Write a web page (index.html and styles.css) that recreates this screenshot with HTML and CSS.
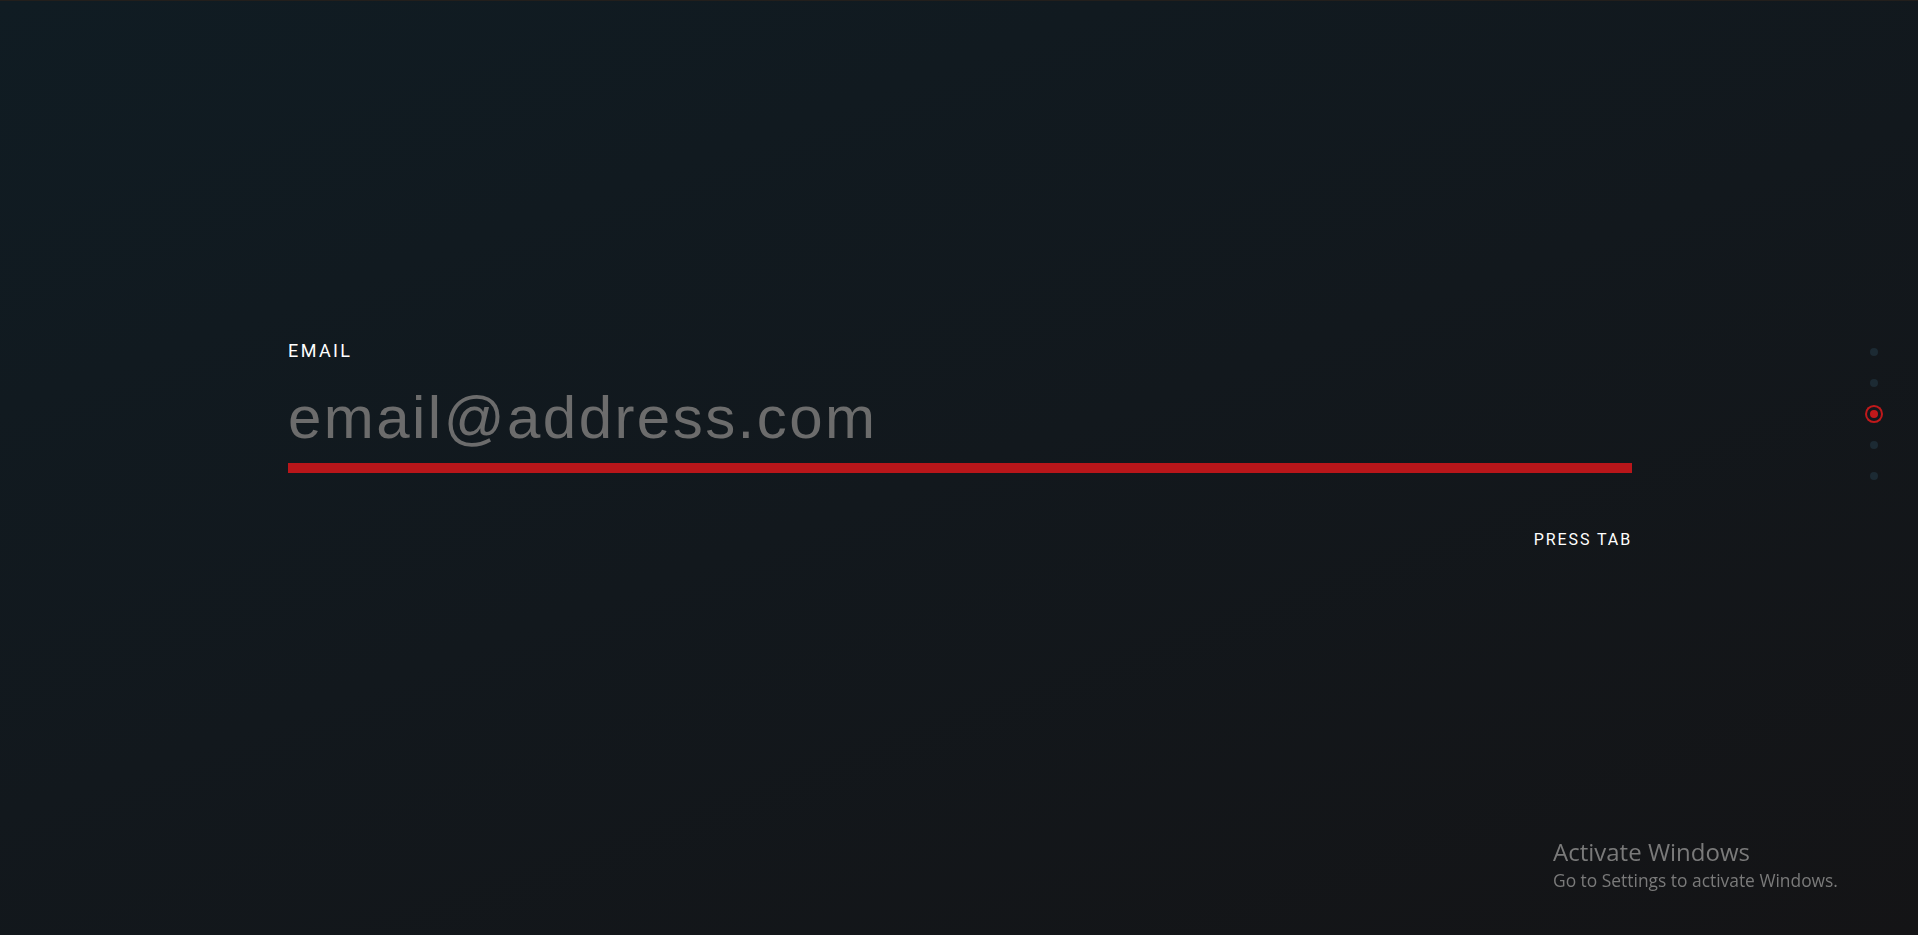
FILE: index.html
```html
<!DOCTYPE html>
<html lang="en">
<head>
<meta charset="utf-8">
<title>Email</title>
<link rel="stylesheet" href="styles.css">
</head>
<body>
<div class="page">
  <form class="form" onsubmit="return false">
    <label class="label" for="email">EMAIL</label>
    <input class="field" id="email" type="email" placeholder="email@address.com">
    <div class="hint">PRESS TAB</div>
  </form>
  <nav class="steps">
    <span class="dot"></span>
    <span class="dot"></span>
    <span class="dot active"></span>
    <span class="dot"></span>
    <span class="dot"></span>
  </nav>
</div>
<div class="watermark">
  <div class="wm-title">Activate Windows</div>
  <div class="wm-sub">Go to Settings to activate Windows.</div>
</div>
</body>
</html>
```

FILE: styles.css
```css
html, body {
  margin: 0;
  height: 100%;
}
body {
  background: linear-gradient(160deg, #101c23 0%, #12181d 50%, #141416 100%);
  border-top: 1px solid #231f1c;
  box-sizing: border-box;
  overflow: hidden;
  font-family: Roboto, "Liberation Sans", sans-serif;
}
.page {
  display: flex;
  align-items: flex-start;
  height: 100%;
}
.form {
  display: flex;
  flex-direction: column;
  width: 1344px;
  margin-left: 288px;
  padding-top: 340px;
}
.label {
  color: #ffffff;
  font-size: 18px;
  font-weight: 400;
  letter-spacing: 2.4px;
  line-height: 20px;
}
.field {
  margin-top: 10px;
  padding: 0;
  height: 92px;
  background: transparent;
  border: none;
  border-bottom: 10px solid #b8161a;
  outline: none;
  color: #dddddd;
  font-family: "Liberation Sans", Arial, sans-serif;
  font-size: 60px;
  letter-spacing: 2.45px;
  line-height: 60px;
}
.field::placeholder {
  color: #6c6c6c;
  opacity: 1;
}
.hint {
  align-self: flex-end;
  margin-top: 57px;
  color: #ffffff;
  font-size: 16px;
  font-weight: 400;
  letter-spacing: 1.9px;
  line-height: 20px;
}
.steps {
  display: flex;
  flex-direction: column;
  align-items: center;
  gap: 23px;
  margin-left: auto;
  margin-right: 35px;
  padding-top: 347px;
  width: 18px;
}
.dot {
  width: 8px;
  height: 8px;
  border-radius: 50%;
  background: #1c2a33;
}
.dot.active {
  background: #c0191b;
  box-shadow: 0 0 0 3px #12181d, 0 0 0 5px #c0191b;
}
.watermark {
  position: fixed;
  left: 1553px;
  top: 836px;
  color: #7a7a7a;
  font-family: "Open Sans", "Noto Sans", sans-serif;
}
.wm-title {
  font-size: 24px;
  line-height: 32px;
}
.wm-sub {
  font-size: 17.4px;
  line-height: 24px;
}
```
